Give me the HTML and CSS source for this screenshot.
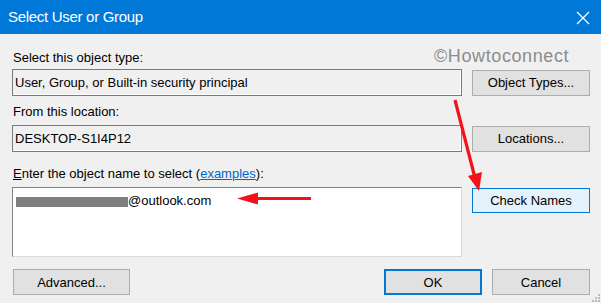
FILE: index.html
```html
<!DOCTYPE html>
<html lang="en">
<head>
    <meta charset="UTF-8">
    <title>Select User or Group</title>
    <link rel="stylesheet" href="styles.css">
</head>
<body>
    <div class="titlebar">
        <span>Select User or Group</span>
        <svg class="close" width="14" height="14" viewBox="0 0 14 14">
            <path d="M1 1 L13 13 M13 1 L1 13" stroke="#fff" stroke-width="1.3" fill="none"/>
        </svg>
    </div>

    <div class="content">
        <div class="watermark">©Howtoconnect</div>

        <div class="label first">Select this object type:</div>
        <div class="row">
            <div class="field">User, Group, or Built-in security principal</div>
            <button class="btn">Object Types...</button>
        </div>

        <div class="label second">From this location:</div>
        <div class="row">
            <div class="field">DESKTOP-S1I4P12</div>
            <button class="btn">Locations...</button>
        </div>

        <div class="label third"><u>E</u>nter the object name to select (<a href="#">examples</a>):</div>
        <div class="row top">
            <div class="names">
                <span class="hidden-part"></span>@outlook.com
            </div>
            <button class="btn check">Check Names</button>
        </div>

        <div class="footer">
            <button class="btn wide">Advanced...</button>
            <div class="actions">
                <button class="btn small focus">OK</button>
                <button class="btn small">Cancel</button>
            </div>
        </div>

        <svg class="grip" width="10" height="10" viewBox="0 0 10 10">
            <rect x="7" y="1" width="2" height="2" fill="#bdbdbd"/>
            <rect x="4" y="4" width="2" height="2" fill="#bdbdbd"/>
            <rect x="7" y="4" width="2" height="2" fill="#bdbdbd"/>
            <rect x="1" y="7" width="2" height="2" fill="#bdbdbd"/>
            <rect x="4" y="7" width="2" height="2" fill="#bdbdbd"/>
            <rect x="7" y="7" width="2" height="2" fill="#bdbdbd"/>
        </svg>
    </div>

    <!-- red arrows drawn over the dialog -->
    <svg class="arrows" width="601" height="303" viewBox="0 0 601 303">
        <path d="M455 100 L475 178" stroke="#f3121c" stroke-width="3.2" fill="none"/>
        <polygon points="468,176 482,172 479,191" fill="#f3121c"/>
        <path d="M255 198.5 L311 198.5" stroke="#f3121c" stroke-width="3.2" fill="none"/>
        <polygon points="237,198.5 258,192.5 258,204.5" fill="#f3121c"/>
    </svg>
</body>
</html>
```

FILE: styles.css
```css
*{
    margin: 0;
    padding: 0;
    box-sizing: border-box;
}

body{
    width: 601px;
    height: 303px;
    overflow: hidden;
    background-color: #f0f0f0;
    font-family: "Liberation Sans", Arial, sans-serif;
    font-size: 13px;
    color: #000;
    position: relative;
}

.titlebar{
    height: 34px;
    background-color: #0078d7;
    color: #fff;
    font-size: 15px;
    letter-spacing: -0.3px;
    display: flex;
    align-items: center;
    justify-content: space-between;
    padding: 0 11px 1px 8px;

    .close{
        margin-top: 2px;
    }
}

.content{
    padding: 0 11px 0 12px;
    position: relative;
    height: 269px;
}

.watermark{
    position: absolute;
    left: 434px;
    top: 12px;
    font-size: 18px;
    letter-spacing: 0.6px;
    color: #8c8c8c;
}

.label{
    line-height: 15px;
    padding-left: 1px;

    &.first{
        padding-top: 16px;
        margin-bottom: 4px;
    }

    &.second{
        margin-top: 8px;
        margin-bottom: 6px;
    }

    &.third{
        margin-top: 14px;
        margin-bottom: 6px;
    }

    a{
        color: #0066cc;
    }
}

.row{
    display: flex;
    align-items: center;
    gap: 10px;

    &.top{
        align-items: flex-start;
    }
}

.field{
    width: 450px;
    height: 27px;
    border: 1px solid #7a7a7a;
    box-shadow: inset -1px -1px 0 #fff;
    padding: 0 2px;
    line-height: 25px;
}

.names{
    width: 450px;
    height: 70px;
    background-color: #fff;
    border: 1px solid;
    border-color: #828282 #dadada #dadada #828282;
    padding: 6px 3px 0;
    line-height: 14px;
    display: flex;
    align-items: flex-start;

    .hidden-part{
        display: inline-block;
        width: 112px;
        height: 10px;
        background-color: #7f7f7f;
        margin-top: 3px;
    }
}

.btn{
    font-family: inherit;
    font-size: 13px;
    color: #000;
    background-color: #e1e1e1;
    border: 1px solid #adadad;
    height: 26px;
    width: 118px;

    &.check{
        background-color: #e5f1fb;
        border-color: #0078d7;
        height: 25px;
        margin-top: 1px;
    }

    &.wide{
        width: 117px;
        margin-left: 1px;
    }

    &.small{
        width: 98px;
    }

    &.focus{
        border: 2px solid #0078d7;
    }
}

.footer{
    display: flex;
    justify-content: space-between;
    margin-top: 12px;

    .actions{
        display: flex;
        gap: 10px;
    }
}

.grip{
    position: absolute;
    right: 0;
    bottom: 0;
}

.arrows{
    position: absolute;
    left: 0;
    top: 0;
}
```
